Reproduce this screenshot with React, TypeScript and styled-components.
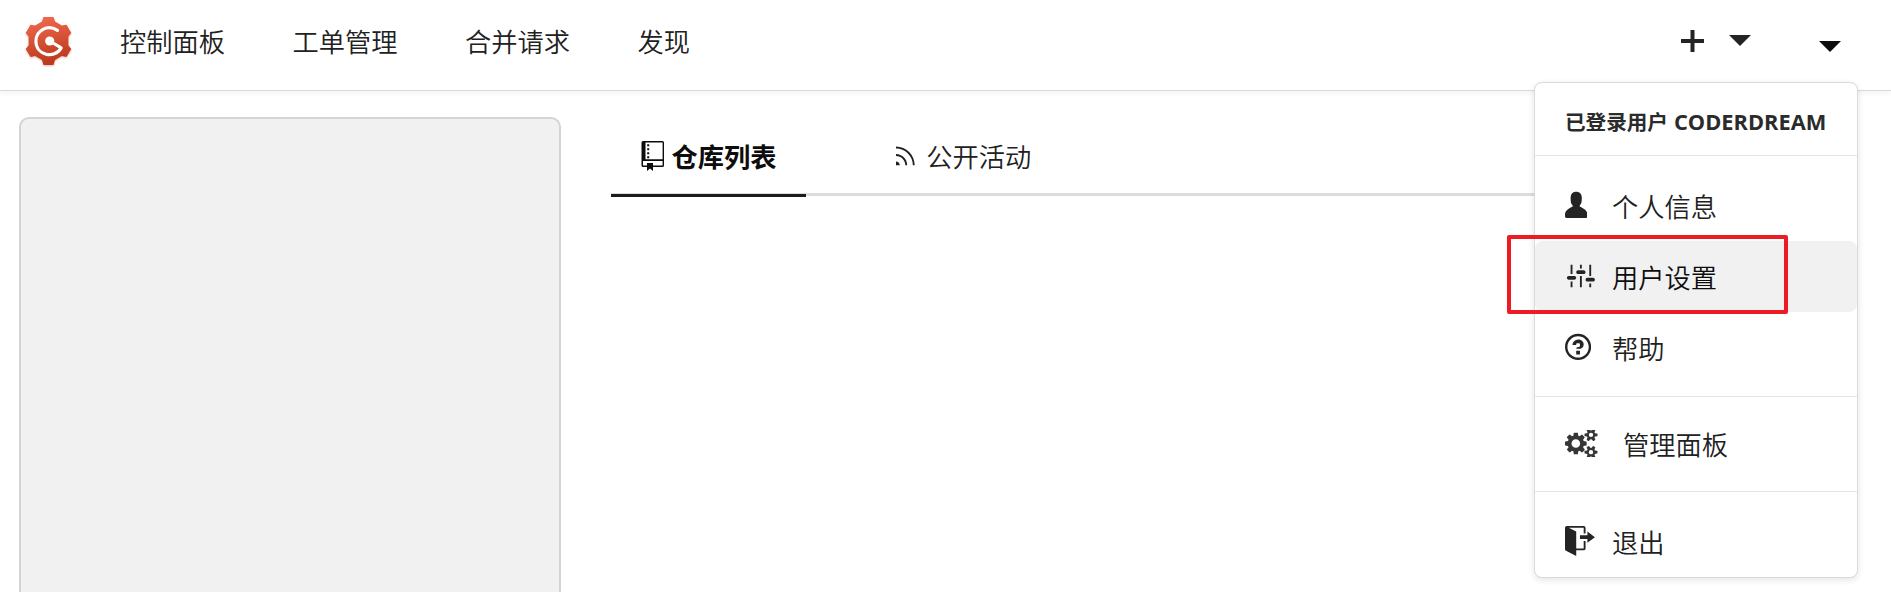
import React from 'react';
import styled, { createGlobalStyle } from 'styled-components';

const GlobalStyle = createGlobalStyle`
  * { box-sizing: border-box; }
  body {
    margin: 0;
    background: #fff;
    color: #212121;
    font: 350 26.25px/1 "Noto Sans CJK SC", "Open Sans", sans-serif;
  }
`;

const Page = styled.div`
  position: relative;
  height: 592px;
  overflow: hidden;
`;

const Header = styled.header`
  display: flex;
  align-items: center;
  height: 91px;
  padding: 0 50px 8px 23px;
  border-bottom: 1px solid #d9dada;
  box-shadow: 0 2px 6px rgba(34, 36, 38, 0.06);
`;

const LogoBox = styled.a`
  display: flex;
  width: 50px;
  height: 52px;
`;

const Nav = styled.nav`
  display: flex;
  gap: 67.5px;
  margin-left: 47px;
`;

const NavLink = styled.a`
  white-space: nowrap;
`;

const Actions = styled.div`
  display: flex;
  align-items: flex-start;
  height: 23px;
  margin-left: auto;
`;

const ActionIcon = styled.svg<{ $left?: number; $top?: number }>`
  display: block;
  margin-left: ${(p) => p.$left ?? 0}px;
  margin-top: ${(p) => p.$top ?? 0}px;
`;

const Body = styled.div`
  display: flex;
  padding: 26px 50px 0 19px;
`;

const Sidebar = styled.aside`
  width: 542px;
  height: 520px;
  border: 2px solid #d4d4d5;
  border-radius: 10px;
  background: #f1f1f1;
`;

const Content = styled.main`
  flex: 1;
  margin-left: 50px;
`;

const Tabs = styled.div`
  display: flex;
  height: 79px;
  border-bottom: 3px solid #dcdcdc;
`;

const Tab = styled.a<{ $active?: boolean }>`
  display: flex;
  align-items: center;
  height: 80px;
  padding: ${(p) => (p.$active ? '0 29.5px 0 30px' : '0 30px 0 90px')};
  border-bottom: 3px solid ${(p) => (p.$active ? '#1b1c1d' : 'transparent')};
  color: ${(p) => (p.$active ? '#0d0d0d' : '#212121')};
  font-weight: ${(p) => (p.$active ? 700 : 350)};
  white-space: nowrap;
`;

const TabLabel = styled.span<{ $gap: number }>`
  margin-left: ${(p) => p.$gap}px;
  padding-top: 1px;
`;

const Menu = styled.div`
  position: absolute;
  left: 1534px;
  top: 82px;
  width: 324px;
  height: 496px;
  border: 1px solid #d9dada;
  border-radius: 8px;
  background: #fff;
  box-shadow: 0 2px 6px rgba(34, 36, 38, 0.12);
`;

const MenuHeader = styled.div`
  display: flex;
  align-items: center;
  height: 72px;
  padding: 6px 0 0 30px;
  font: 700 20.6px/1 "Open Sans", "Noto Sans CJK SC", sans-serif;
  color: #2b2b2b;
  white-space: pre;
`;

const UserName = styled.span`
  margin-left: 6px;
  font-size: 21.8px;
`;

const MenuGroup = styled.div<{ $top: number; $bottom: number }>`
  padding: ${(p) => p.$top}px 0 ${(p) => p.$bottom}px;
  border-top: 1px solid #e4e4e5;
`;

const MenuItem = styled.a<{ $hover?: boolean }>`
  display: flex;
  align-items: center;
  height: 71px;
  padding-left: 30px;
  border-radius: 8px;
  background: ${(p) => (p.$hover ? '#f1f1f1' : 'transparent')};
  color: ${(p) => (p.$hover ? '#0d0d0d' : '#212121')};
`;

const MenuIcon = styled.span<{ $width?: number }>`
  display: flex;
  width: ${(p) => p.$width ?? 47}px;
  margin-top: -1px;
  color: #242424;
`;

const MenuLabel = styled.span`
  padding-top: 1px;
`;

const Highlight = styled.div`
  position: absolute;
  left: 1507px;
  top: 235px;
  width: 281px;
  height: 79px;
  border: 4px solid #ed1c24;
  border-radius: 2px;
`;

const glyphs = {
  rss: {
    w: 10,
    d: 'M2 13H0v-2c1.11 0 2 .89 2 2zM0 3v1a9 9 0 0 1 9 9h1C10 7.48 5.52 3 0 3zm0 4v1c2.75 0 5 2.25 5 5h1c0-3.31-2.69-6-6-6z',
  },
  person: {
    w: 12,
    d: 'M12 14.002a.998.998 0 0 1-.998.998H1.001A1 1 0 0 1 0 13.999V13c0-2.633 4-4 4-4s.229-.409 0-1c-.841-.62-.944-1.59-1-4 .173-2.413 1.867-3 3-3s2.827.586 3 3c-.056 2.41-.159 3.38-1 4-.229.59 0 1 0 1s4 1.367 4 4v1.002z',
  },
  settings: {
    w: 16,
    d: 'M4 7H3V2h1v5zm-1 7h1v-3H3v3zm5 0h1V8H8v6zm5 0h1v-2h-1v2zm1-12h-1v6h1V2zM9 2H8v2h1V2zM5 8H2c-.55 0-1 .45-1 1s.45 1 1 1h3c.55 0 1-.45 1-1s-.45-1-1-1zm5-3H7c-.55 0-1 .45-1 1s.45 1 1 1h3c.55 0 1-.45 1-1s-.45-1-1-1zm5 4h-3c-.55 0-1 .45-1 1s.45 1 1 1h3c.55 0 1-.45 1-1s-.45-1-1-1z',
  },
  question: {
    w: 14,
    d: 'M6 10h2v2H6v-2zm4-3.5C10 8.64 8 9 8 9H6c0-.55.45-1 1-1h.5c.28 0 .5-.22.5-.5v-1c0-.28-.22-.5-.5-.5h-1c-.28 0-.5.22-.5.5V7H4c0-1.5 1.5-3 3-3s3 1 3 2.5zM7 2.3c3.14 0 5.7 2.56 5.7 5.7s-2.56 5.7-5.7 5.7A5.71 5.71 0 0 1 1.3 8c0-3.14 2.56-5.7 5.7-5.7zM7 1C3.14 1 0 4.14 0 8s3.14 7 7 7 7-3.14 7-7-3.14-7-7-7z',
  },
  signOut: {
    w: 16,
    d: 'M12 9V7H8V5h4V3l4 3-4 3zm-2 3H6V3L2 1h8v3h1V1c0-.55-.45-1-1-1H1C.45 0 0 .45 0 1v11.38c0 .39.22.73.55.91L6 16.01V13h4c.55 0 1-.45 1-1V8h-1v4z',
  },
};

function Glyph({ name }: { name: keyof typeof glyphs }) {
  const { w, d } = glyphs[name];
  return (
    <svg width={w * 1.87} height={29.9} viewBox={`0 0 ${w} 16`} fill="currentColor">
      <path d={d} />
    </svg>
  );
}

function RepoIcon() {
  return (
    <svg width="23" height="30" viewBox="0 0 23 30" fill="currentColor">
      <path
        fillRule="evenodd"
        d="M2 0h19.5a1.5 1.5 0 0 1 1.5 1.5v23a1.5 1.5 0 0 1-1.5 1.5H12v4l-3-2.6L6 30v-4H2a1.5 1.5 0 0 1-1.5-1.5v-23A1.5 1.5 0 0 1 2 0zm2.500 1.400v16.800h17.100V1.400zM2 20v4.500h4V22h6v2.500h9.600V20z"
      />
      <path d="M6.200 3.200h2v2h-2zm0 4h2v2h-2zm0 4h2v2h-2zm0 4h2v2h-2z" />
    </svg>
  );
}

const smallGear =
  'v140q0 16-149 31-12 27-30 52 51 113 51 138 0 4-4 7-122 71-124 71-8 0-46-47t-52-68q-20 2-30 2t-30-2q-14 21-52 68t-46 47q-2 0-124-71-4-3-4-7 0-25 51-138-18-25-30-52-149-15-149-31v-140q0-16 149-31 13-29 30-52-51-113-51-138 0-4 4-7 4-2 35-20t59-34 30-16q8 0 46 46.500t52 67.500q20-2 30-2t30 2q51-71 92-112l6-2q4 0 124 70 4 3 4 7 0 25-51 138 17 23 30 52 149 15 149 31z';

function GearsIcon() {
  return (
    <svg width="32.5" height="27" viewBox="0 -30 1920 1595" fill="#363636">
      <path
        fillRule="evenodd"
        d="M896 768q0-106-75-181t-181-75-181 75-75 181 75 181 181 75 181-75 75-181zM1280 677v185q0 10-7 19.5t-16 10.5l-155 24q-11 35-32 76 34 48 90 115 7 11 7 20 0 12-7 19-23 30-82.5 89.5t-78.5 59.5q-11 0-21-7l-115-90q-37 19-77 31-11 108-23 155-7 24-30 24h-186q-11 0-20-7.5t-10-17.5l-23-153q-34-10-75-31l-118 89q-7 7-20 7-11 0-21-8-144-133-144-160 0-9 7-19 10-14 41-53t47-61q-23-44-35-82l-152-24q-10-1-17-9.5t-7-19.5v-185q0-10 7-19.5t16-10.5l155-24q11-35 32-76-34-48-90-115-7-11-7-20 0-12 7-20 22-30 82-89t79-59q11 0 21 7l115 90q34-18 77-32 11-108 23-154 7-24 30-24h186q11 0 20 7.5t10 17.5l23 153q34 10 75 31l118-89q8-7 20-7 11 0 21 8 144 133 144 160 0 8-7 19-12 16-42 54t-45 60q23 48 34 82l152 23q10 2 17 10.5t7 19.5z"
      />
      <path fillRule="evenodd" d={`M1920 1210${smallGear}M1664 1280a128 128 0 1 0-256 0a128 128 0 1 0 256 0z`} />
      <path fillRule="evenodd" d={`M1920 186${smallGear}M1664 256a128 128 0 1 0-256 0a128 128 0 1 0 256 0z`} />
    </svg>
  );
}

function Logo() {
  return (
    <svg width="50" height="52" viewBox="0 0 50 52">
      <defs>
        <linearGradient id="gear" x1="0" y1="0" x2="0.2" y2="1">
          <stop offset="0" stopColor="#f26c51" />
          <stop offset="1" stopColor="#bd3a1d" />
        </linearGradient>
      </defs>
      <path
        d="M20.5 2h10l1.5 4.6 6.8 4 4.7-.9 4.8 8.3-2.9 3.6v8.6l2.9 3.7-4.8 8.1-4.7-.9-6.8 4L30.5 50h-10L19 45.100l-6.800-4-4.700.9-4.800-8.100 2.900-3.700v-8.600L2.700 18l4.800-8.300 4.700.9 6.800-4z"
        fill="url(#gear)"
        style={{ filter: 'drop-shadow(0 1px 1px rgba(189,58,29,.35))' }}
      />
      <path
        d="M34.500 15.400C24.500 8.800 12.900 15.600 12.900 26.200c0 14 18.500 18.400 25.300 6.700L26.700 26"
        fill="none"
        stroke="#fff"
        strokeWidth="3.100"
        strokeLinejoin="round"
        strokeLinecap="round"
      />
      <circle cx="26.700" cy="26" r="4.600" fill="#fff" />
    </svg>
  );
}

export default function App() {
  return (
    <Page>
      <GlobalStyle />
      <Header>
        <LogoBox><Logo /></LogoBox>
        <Nav>
          <NavLink>控制面板</NavLink>
          <NavLink>工单管理</NavLink>
          <NavLink>合并请求</NavLink>
          <NavLink>发现</NavLink>
        </Nav>
        <Actions>
          <ActionIcon width="23" height="22" viewBox="0 0 23 22">
            <path d="M9.500 0h4v9H23v4h-9.500v9h-4v-9H0V9h9.500z" fill="#242424" />
          </ActionIcon>
          <ActionIcon $left={25} $top={5} width="22" height="11" viewBox="0 0 22 11">
            <path d="M0 0h22L11 11z" fill="#242424" />
          </ActionIcon>
          <ActionIcon $left={68} $top={11} width="22" height="11" viewBox="0 0 22 11">
            <path d="M0 0h22L11 11z" fill="#0d0d0d" />
          </ActionIcon>
        </Actions>
      </Header>
      <Body>
        <Sidebar />
        <Content>
          <Tabs>
            <Tab $active>
              <RepoIcon />
              <TabLabel $gap={7.5}>仓库列表</TabLabel>
            </Tab>
            <Tab>
              <Glyph name="rss" />
              <TabLabel $gap={11.5}>公开活动</TabLabel>
            </Tab>
          </Tabs>
        </Content>
      </Body>
      <Menu>
        <MenuHeader>
          已登录用户
          <UserName>CODERDREAM</UserName>
        </MenuHeader>
        <MenuGroup $top={14} $bottom={13}>
          <MenuItem>
            <MenuIcon><Glyph name="person" /></MenuIcon>
            <MenuLabel>个人信息</MenuLabel>
          </MenuItem>
          <MenuItem $hover>
            <MenuIcon><Glyph name="settings" /></MenuIcon>
            <MenuLabel>用户设置</MenuLabel>
          </MenuItem>
          <MenuItem>
            <MenuIcon><Glyph name="question" /></MenuIcon>
            <MenuLabel>帮助</MenuLabel>
          </MenuItem>
        </MenuGroup>
        <MenuGroup $top={11} $bottom={12}>
          <MenuItem>
            <MenuIcon $width={58}><GearsIcon /></MenuIcon>
            <MenuLabel>管理面板</MenuLabel>
          </MenuItem>
        </MenuGroup>
        <MenuGroup $top={14} $bottom={0}>
          <MenuItem>
            <MenuIcon><Glyph name="signOut" /></MenuIcon>
            <MenuLabel>退出</MenuLabel>
          </MenuItem>
        </MenuGroup>
      </Menu>
      <Highlight />
    </Page>
  );
}
